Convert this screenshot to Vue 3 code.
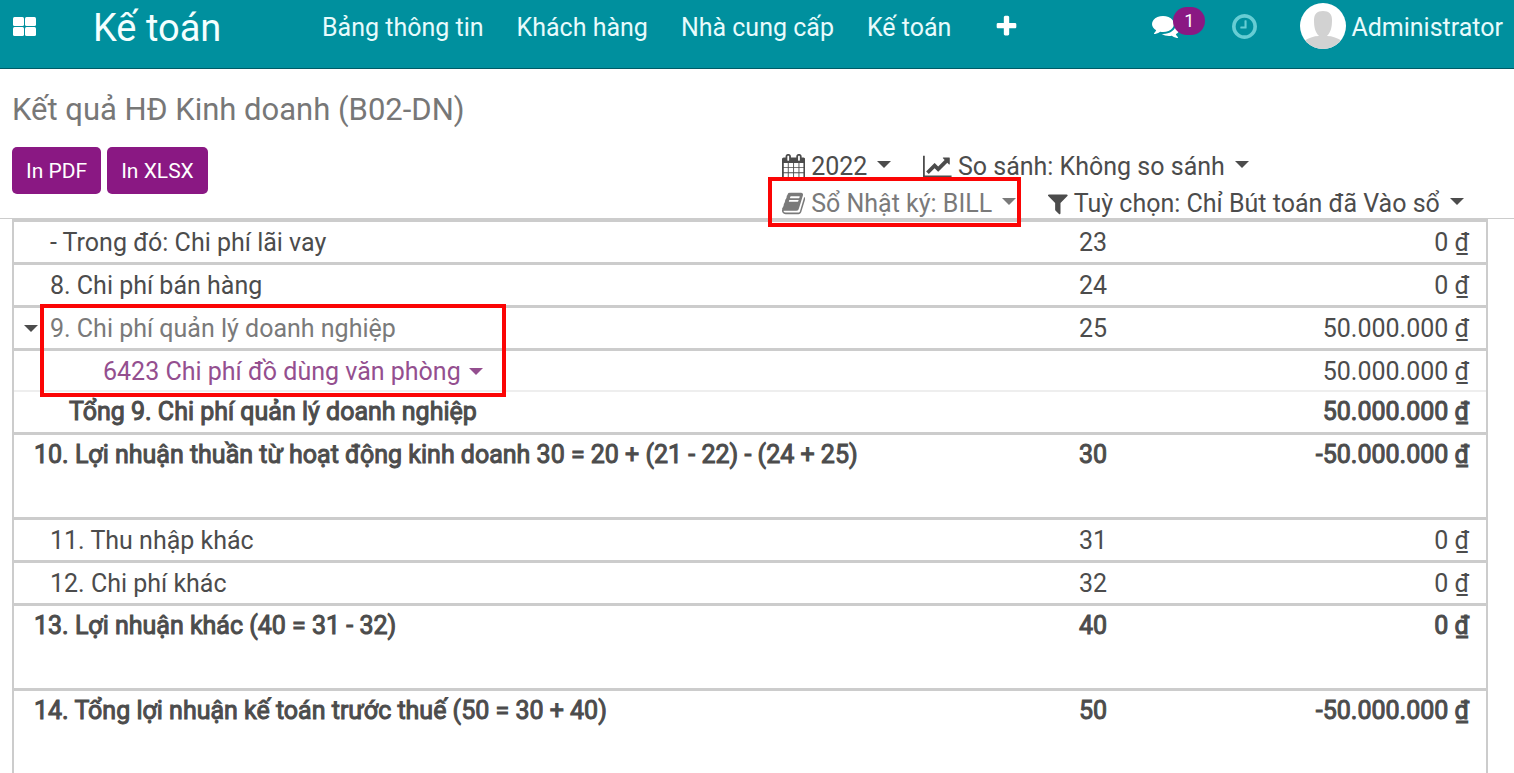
<template>
  <div class="app">
    <header class="navbar">
      <a href="#" class="apps-toggle" aria-label="Ứng dụng">
        <svg viewBox="0 0 24 20" width="24" height="20" fill="currentColor">
          <rect x="1" y="1" width="11" height="9" rx="1.5" />
          <rect x="13" y="1" width="11" height="9" rx="1.5" />
          <rect x="1" y="11" width="11" height="9" rx="1.5" />
          <rect x="13" y="11" width="11" height="9" rx="1.5" />
        </svg>
      </a>
      <a href="#" class="brand">Kế toán</a>
      <nav class="menu">
        <a v-for="item in menuItems" :key="item" href="#" class="nav-text">{{ item }}</a>
        <a href="#" class="menu-plus" aria-label="Thêm">
          <svg class="icon" viewBox="0 0 1792 1792"><path :d="icons.plus" /></svg>
        </a>
      </nav>
      <div class="systray">
        <button type="button" class="messages" aria-label="Tin nhắn">
          <svg class="icon" viewBox="0 0 1792 1792"><path :d="icons.comments" /></svg>
          <span class="badge">1</span>
        </button>
        <button type="button" class="activities" aria-label="Hoạt động">
          <svg class="icon" viewBox="128 128 1536 1536"><path :d="icons.clock" /></svg>
        </button>
        <a href="#" class="user">
          <svg class="avatar" viewBox="0 0 46 46">
            <defs>
              <clipPath id="avatarClip"><circle cx="23" cy="23" r="23" /></clipPath>
            </defs>
            <g clip-path="url(#avatarClip)">
              <rect width="46" height="46" fill="#fff" />
              <path
                d="M23 8c-6 0-9 3-9 9 0 7 1 12 5 16-5 0-11 2-15 5v8h38v-8c-4-3-10-5-15-5 4-4 5-9 5-16 0-6-3-9-9-9z"
                fill="#d2d2d2"
              />
            </g>
          </svg>
          <span class="nav-text">Administrator</span>
        </a>
      </div>
    </header>

    <section class="control-panel">
      <h1>Kết quả HĐ Kinh doanh (B02-DN)</h1>
      <div class="panel-row">
        <div class="actions">
          <button type="button" class="btn">In PDF</button>
          <button type="button" class="btn">In XLSX</button>
        </div>
        <div class="filters">
          <div v-for="(line, i) in filterLines" :key="i" class="filter-line">
            <button
              v-for="f in line"
              :key="f.id"
              type="button"
              class="filter"
              :class="{ 'is-hover': f.marked }"
            >
              <svg class="icon" :viewBox="f.viewBox"><path :d="icons[f.id]" /></svg>
              <span class="filter-label">{{ f.label }}</span>
              <i class="caret"></i>
              <span v-if="f.marked" class="mark mark-filter"></span>
            </button>
          </div>
        </div>
      </div>
    </section>

    <main class="report">
      <table>
        <colgroup>
          <col />
          <col class="col-code" />
          <col class="col-amount" />
        </colgroup>
        <tbody>
          <tr v-for="row in rows" :key="row.label" :class="row.type">
            <td class="label">
              <button v-if="row.type === 'parent'" type="button" class="fold" aria-label="Thu gọn"><i class="caret"></i></button>
              <a v-if="row.type === 'account'" href="#">{{ row.label }} <i class="caret"></i></a>
              <span v-else>{{ row.label }}</span>
              <span v-if="row.type === 'parent'" class="mark mark-rows"></span>
            </td>
            <td>{{ row.code }}</td>
            <td class="amount">{{ row.amount }}&nbsp;₫</td>
          </tr>
        </tbody>
      </table>
    </main>
  </div>
</template>

<script setup>
const menuItems = ['Bảng thông tin', 'Khách hàng', 'Nhà cung cấp', 'Kế toán']

const filterLines = [
  [
    { id: 'calendar', label: '2022', viewBox: '64 0 1664 1792' },
    { id: 'chart', label: 'So sánh: Không so sánh', viewBox: '0 0 2048 1792' },
  ],
  [
    { id: 'book', label: 'Sổ Nhật ký: BILL', viewBox: '64 0 1664 1792', marked: true },
    { id: 'filter', label: 'Tuỳ chọn: Chỉ Bút toán đã Vào sổ', viewBox: '0 0 1408 1792' },
  ],
]

const rows = [
  { type: 'line', label: '- Trong đó: Chi phí lãi vay', code: '23', amount: '0' },
  { type: 'line', label: '8. Chi phí bán hàng', code: '24', amount: '0' },
  { type: 'parent', label: '9. Chi phí quản lý doanh nghiệp', code: '25', amount: '50.000.000' },
  { type: 'account', label: '6423 Chi phí đồ dùng văn phòng', code: '', amount: '50.000.000' },
  { type: 'total', label: 'Tổng 9. Chi phí quản lý doanh nghiệp', code: '', amount: '50.000.000' },
  { type: 'section', label: '10. Lợi nhuận thuần từ hoạt động kinh doanh 30 = 20 + (21 - 22) - (24 + 25)', code: '30', amount: '-50.000.000' },
  { type: 'line', label: '11. Thu nhập khác', code: '31', amount: '0' },
  { type: 'line', label: '12. Chi phí khác', code: '32', amount: '0' },
  { type: 'section', label: '13. Lợi nhuận khác (40 = 31 - 32)', code: '40', amount: '0' },
  { type: 'section', label: '14. Tổng lợi nhuận kế toán trước thuế (50 = 30 + 40)', code: '50', amount: '-50.000.000' },
]

const icons = {
  plus: 'M1600 736v192q0 40-28 68t-68 28h-416v416q0 40-28 68t-68 28h-192q-40 0-68-28t-28-68v-416h-416q-40 0-68-28t-28-68v-192q0-40 28-68t68-28h416v-416q0-40 28-68t68-28h192q40 0 68 28t28 68v416h416q40 0 68 28t28 68z',
  comments:
    'M1408 768q0 139-94 257t-256.5 186.5-353.5 68.5q-86 0-176-16-124 88-278 128-36 9-86 16h-3q-11 0-20.5-8t-11.5-21q-1-3-1-6.5t.5-6.5 2-6l2.5-5 3.5-5.5 4-5 4.5-5 4-4.5q5-6 23-25t26-29.5 22.5-29 25-38.5 20.5-44q-124-72-195-177t-71-224q0-139 94-257t256.5-186.5 353.5-68.5 353.5 68.5 256.5 186.5 94 257zm384 256q0 120-71 224.5t-195 176.5q10 24 20.5 44t25 38.5 22.5 29 26 29.5 23 25q1 1 4 4.5t4.5 5 4 5 3.5 5.5l2.5 5 2 6 .5 6.5-1 6.5q-3 14-13 22t-22 7q-50-7-86-16-154-40-278-128-90 16-176 16-271 0-472-132 58 4 88 4 161 0 309-45t264-129q125-92 192-212t67-254q0-77-23-152 129 71 204 178t75 230z',
  clock:
    'M1024 544v448q0 14-9 23t-23 9h-320q-14 0-23-9t-9-23v-64q0-14 9-23t23-9h224v-352q0-14 9-23t23-9h64q14 0 23 9t9 23zm416 352q0-148-73-273t-198-198-273-73-273 73-198 198-73 273 73 273 198 198 273 73 273-73 198-198 73-273zm224 0q0 209-103 385.5t-279.5 279.5-385.5 103-385.5-103-279.5-279.5-103-385.5 103-385.5 279.5-279.5 385.5-103 385.5 103 279.5 279.5 103 385.5z',
  calendar:
    'M192 1664h288v-288h-288v288zm352 0h320v-288h-320v288zm-352-352h288v-320h-288v320zm352 0h320v-320h-320v320zm-352-384h288v-288h-288v288zm736 736h320v-288h-320v288zm-384-736h320v-288h-320v288zm768 736h288v-288h-288v288zm-384-352h320v-320h-320v320zm-352-864v-288q0-13-9.5-22.5t-22.5-9.5h-64q-13 0-22.5 9.5t-9.5 22.5v288q0 13 9.5 22.5t22.5 9.5h64q13 0 22.5-9.5t9.5-22.5zm736 864h288v-320h-288v320zm-384-384h320v-288h-320v288zm384 0h288v-288h-288v288zm32-480v-288q0-13-9.5-22.5t-22.5-9.5h-64q-13 0-22.5 9.5t-9.5 22.5v288q0 13 9.5 22.5t22.5 9.5h64q13 0 22.5-9.5t9.5-22.5zm384-64v1280q0 52-38 90t-90 38h-1408q-52 0-90-38t-38-90v-1280q0-52 38-90t90-38h128v-96q0-66 47-113t113-47h64q66 0 113 47t47 113v96h384v-96q0-66 47-113t113-47h64q66 0 113 47t47 113v96h128q52 0 90 38t38 90z',
  chart:
    'M2048 1536v128h-2048v-1536h128v1408h1920zm-128-1248v435q0 21-19.5 29.5t-35.5-7.5l-121-121-633 633q-10 10-23 10t-23-10l-233-233-416 416-192-192 585-585q10-10 23-10t23 10l233 233 464-464-121-121q-16-16-7.5-35.5t29.5-19.5h435q14 0 23 9t9 23z',
  book: 'M1703 478q40 57 18 129l-275 906q-19 64-76.5 107.5t-122.5 43.5h-923q-77 0-148.5-53.5t-99.5-131.5q-24-67-2-127 0-4 3-27t4-37q1-8-3-21.5t-3-19.5q2-11 8-21t16.5-23.5 16.5-23.5q23-38 45-91.5t30-91.5q3-10 .5-30t-.5-28q3-11 17-28t17-23q21-36 42-92t25-90q1-9-2.5-32t.5-28q4-13 22-30.5t22-22.5q19-26 42.5-84.5t27.5-96.5q1-8-3-25.5t-2-26.5q2-8 9-18t18-23 17-21q8-12 16.5-30.5t15-35 16-36 19.5-32 26.5-23.5 36-11.5 47.5 5.5l-1 3q38-9 51-9h761q74 0 114 56t18 130l-274 906q-36 119-71.5 153.5t-128.5 34.5h-869q-27 0-38 15-11 16-1 43 24 70 144 70h923q29 0 56-15.5t35-41.5l300-987q7-22 5-57 38 15 59 43zm-1064 2q-4 13 2 22.5t20 9.5h608q13 0 25.5-9.5t16.5-22.5l21-64q4-13-2-22.5t-20-9.5h-608q-13 0-25.5 9.5t-16.5 22.5zm-83 256q-4 13 2 22.5t20 9.5h608q13 0 25.5-9.5t16.5-22.5l21-64q4-13-2-22.5t-20-9.5h-608q-13 0-25.5 9.5t-16.5 22.5z',
  filter:
    'M1403 295q17 41-14 70l-493 493v742q0 42-39 59-13 5-25 5-27 0-45-19l-256-256q-19-19-19-45v-486l-493-493q-31-29-14-70 17-39 59-39h1280q42 0 59 39z',
}
</script>

<style>
body {
  background: #fff;
  overflow: hidden;
}
</style>

<style scoped>
.app {
  font-family: Roboto, 'Liberation Sans', sans-serif;
  font-size: 25px;
  line-height: 30px;
  color: #4c4c4c;
}

.app *,
.app {
  box-sizing: border-box;
}

a {
  color: inherit;
  text-decoration: none;
}

button {
  font: inherit;
  color: inherit;
  background: none;
  border: none;
  padding: 0;
  cursor: pointer;
}

.icon {
  display: block;
  height: 25px;
  fill: currentColor;
  flex: none;
}

.caret {
  display: inline-block;
  flex: none;
  border: 7px solid transparent;
  border-top-color: currentColor;
  border-bottom: 0;
}

/* top bar */
.navbar {
  display: flex;
  align-items: center;
  height: 69px;
  padding: 0 11px 16px 12px;
  color: #e8fbfc;
  background: #00909e;
  border-bottom: 1px solid #005b66;
  white-space: nowrap;
}

.nav-text,
.brand {
  padding-top: 4px;
}

.apps-toggle {
  display: flex;
  width: 81px;
  color: #fff;
}

.brand {
  width: 229px;
  font-size: 38px;
  color: #f4ffff;
}

.menu {
  display: flex;
  align-items: center;
  gap: 33px;
}

.menu-plus {
  margin-left: 10px;
  color: #fff;
}

.systray {
  display: flex;
  align-items: center;
  margin-left: auto;
}

.messages {
  position: relative;
  margin-right: 52px;
  color: #fff;
}

.messages .icon {
  height: 28px;
}

.badge {
  position: absolute;
  top: -5px;
  left: 21px;
  width: 32px;
  height: 28px;
  border-radius: 14px;
  background: #8a1883;
  font-size: 18px;
  line-height: 28px;
}

.activities {
  margin-right: 43px;
  color: #66cdd4;
}

.user {
  display: flex;
  align-items: center;
  gap: 5px;
}

.avatar {
  width: 46px;
  height: 46px;
}

/* title, print buttons and filters */
.control-panel {
  padding: 22px 12px 0;
  border-bottom: 1px solid #ccc;
}

h1 {
  margin: 0;
  font-size: 31px;
  line-height: 38px;
  font-weight: 400;
  color: #777;
}

.panel-row {
  display: flex;
  padding-top: 18px;
}

.actions {
  display: flex;
  flex: 0 0 770px;
  gap: 6px;
}

.btn {
  height: 47px;
  padding: 0 14px;
  border-radius: 5px;
  background: #8a1883;
  color: #fff;
  font-size: 21px;
}

.filters {
  display: flex;
  flex-direction: column;
  gap: 7px;
  padding-top: 4px;
}

.filter-line {
  display: flex;
  gap: 32px;
}

.filter {
  position: relative;
  display: flex;
  align-items: center;
  gap: 6px;
  height: 30px;
  white-space: nowrap;
}

.filter-label {
  padding-top: 2px;
}

.filter .caret {
  margin: 0 0 3px 4px;
}

.filter.is-hover {
  color: #7a7a7a;
}

/* red highlight frames */
.mark {
  position: absolute;
  z-index: 1;
  border: 4px solid #fb0505;
  pointer-events: none;
}

.mark-filter {
  inset: -11px -5px -9px -14px;
}

.mark-rows {
  top: -4px;
  left: 26px;
  width: 466px;
  height: 93px;
}

/* report */
.report {
  padding: 0 26px 0 12px;
}

table {
  width: 100%;
  table-layout: fixed;
  border: 2px solid #ccc;
  border-top-width: 3px;
  border-spacing: 0;
  white-space: nowrap;
}

.col-code {
  width: 187px;
}

.col-amount {
  width: 220px;
}

td {
  height: 43px;
  padding: 6px 0 4px;
  border-bottom: 3px solid #ccc;
  vertical-align: top;
}

.label {
  position: relative;
  padding-left: 36px;
}

.amount {
  padding-right: 17px;
  text-align: right;
}

.fold {
  position: absolute;
  top: 5px;
  left: 10px;
  display: flex;
  align-items: center;
  height: 30px;
}

.parent .label {
  color: #7a7a7a;
}

.parent .fold {
  color: #4c4c4c;
}

.account td {
  height: 41px;
  padding-bottom: 3px;
  border-bottom: 2px solid #eee;
}

.account .label {
  padding-left: 89px;
  color: #944f8f;
}

.account .caret {
  margin-left: 2px;
  vertical-align: 5px;
}

.total .label {
  padding-left: 55px;
}

.total td,
.section td {
  padding-top: 5px;
  -webkit-text-stroke: 1px currentColor;
}

.section td {
  height: 85px;
}

.section .label {
  padding-left: 20px;
}
</style>
